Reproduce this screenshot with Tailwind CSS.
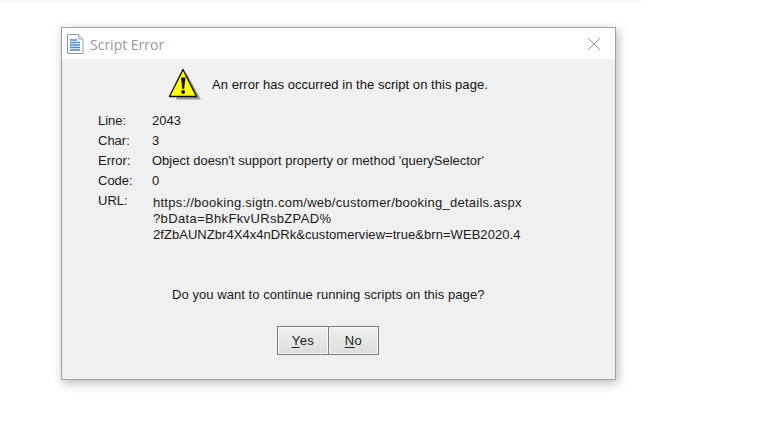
<!DOCTYPE html>
<html lang="en">
<head>
  <meta charset="UTF-8">
  <title>Script Error</title>
  <script src="https://cdn.jsdelivr.net/npm/@tailwindcss/browser@4"></script>
</head>
<body class="bg-white h-[427px] overflow-hidden font-['Liberation_Sans',Arial,sans-serif]">
  <div class="w-[641px] h-[2px] bg-[#f6f6f6]"></div>
  <div class="ml-[61px] mt-[25px] w-[555px] h-[353px] border border-[#a0a0a0] bg-[#f0f0f0] shadow-[2px_3px_10px_rgba(0,0,0,0.28)] flex flex-col">
    <div class="h-[31px] bg-white flex items-center pl-[4px] pr-[14px] shrink-0">
      <svg width="18" height="20" viewBox="0 0 18 20" class="shrink-0">
        <path d="M1.5 .5H12.5L17 5V19.5H1.5Z" fill="#fdfdfd" stroke="#8f9aa5"/>
        <path d="M12.5 .5V5H17" fill="#e4e8ec" stroke="#a6adb5"/>
        <path d="M4 6H11M4 8.5H14M4 11H14M4 13.5H14M4 16H14" stroke="#4f86c6" stroke-width="1.4"/>
      </svg>
      <span class="ml-[6px] mt-[1px] text-[14px] text-[#999] font-['Open_Sans',sans-serif]">Script Error</span>
      <svg width="14" height="14" viewBox="0 0 14 14" class="ml-auto">
        <path d="M1 1L13 13M13 1L1 13" stroke="#999" stroke-width="1"/>
      </svg>
    </div>
    <div class="flex items-center h-[50px] pl-[106px] shrink-0">
      <svg width="34" height="33" viewBox="0 0 34 33" class="shrink-0">
        <path d="M18.5 5L33 31.5H8Z" fill="#777" opacity=".7"/>
        <path d="M15 1.5L28.5 28.5H1.5Z" fill="#ffff00" stroke="#111" stroke-width="1.4" stroke-linejoin="round"/>
        <path d="M13 9.5H17.5L16.2 21H14.3Z" fill="#111"/>
        <circle cx="15.2" cy="24" r="1.9" fill="#111"/>
      </svg>
      <span class="ml-[10px] mt-[2px] text-[13px] tracking-[0.04px] text-[#111]">An error has occurred in the script on this page.</span>
    </div>
    <div class="pl-[36px] pt-[2px] text-[13px] text-[#1a1a1a]">
      <div class="flex h-[20px] items-center"><span class="w-[54px]">Line:</span><span>2043</span></div>
      <div class="flex h-[20px] items-center"><span class="w-[54px]">Char:</span><span>3</span></div>
      <div class="flex h-[20px] items-center"><span class="w-[54px]">Error:</span><span>Object doesn't support property or method 'querySelector'</span></div>
      <div class="flex h-[20px] items-center"><span class="w-[54px]">Code:</span><span>0</span></div>
      <div class="flex items-start">
        <span class="w-[54px] h-[20px] flex items-center">URL:</span>
        <div class="ml-[1px] pt-[4px] leading-[16px]">
          <div class="tracking-[0.26px]">https://booking.sigtn.com/web/customer/booking_details.aspx</div>
          <div class="tracking-[0.35px]">?bData=BhkFkvURsbZPAD%</div>
          <div class="tracking-[0.05px]">2fZbAUNZbr4X4x4nDRk&amp;customerview=true&amp;brn=WEB2020.4</div>
        </div>
      </div>
    </div>
    <div class="mt-[44px] pl-[110px] text-[13px] tracking-[0.06px] leading-[16px] text-[#1a1a1a]">Do you want to continue running scripts on this page?</div>
    <div class="mt-[23px] pl-[215px] flex">
      <button class="w-[52px] h-[29px] border border-[#7c7c7c] bg-gradient-to-b from-[#f0f0f0] to-[#dcdcdc] shadow-[inset_0_0_0_1px_#f7f7f7] text-[13px] tracking-[0.5px] text-[#222]"><span class="underline underline-offset-2">Y</span>es</button>
      <button class="-ml-px w-[51px] h-[29px] border border-[#7c7c7c] bg-gradient-to-b from-[#f0f0f0] to-[#dcdcdc] shadow-[inset_0_0_0_1px_#f7f7f7] text-[13px] tracking-[0.5px] text-[#222]"><span class="underline underline-offset-2">N</span>o</button>
    </div>
  </div>
</body>
</html>
